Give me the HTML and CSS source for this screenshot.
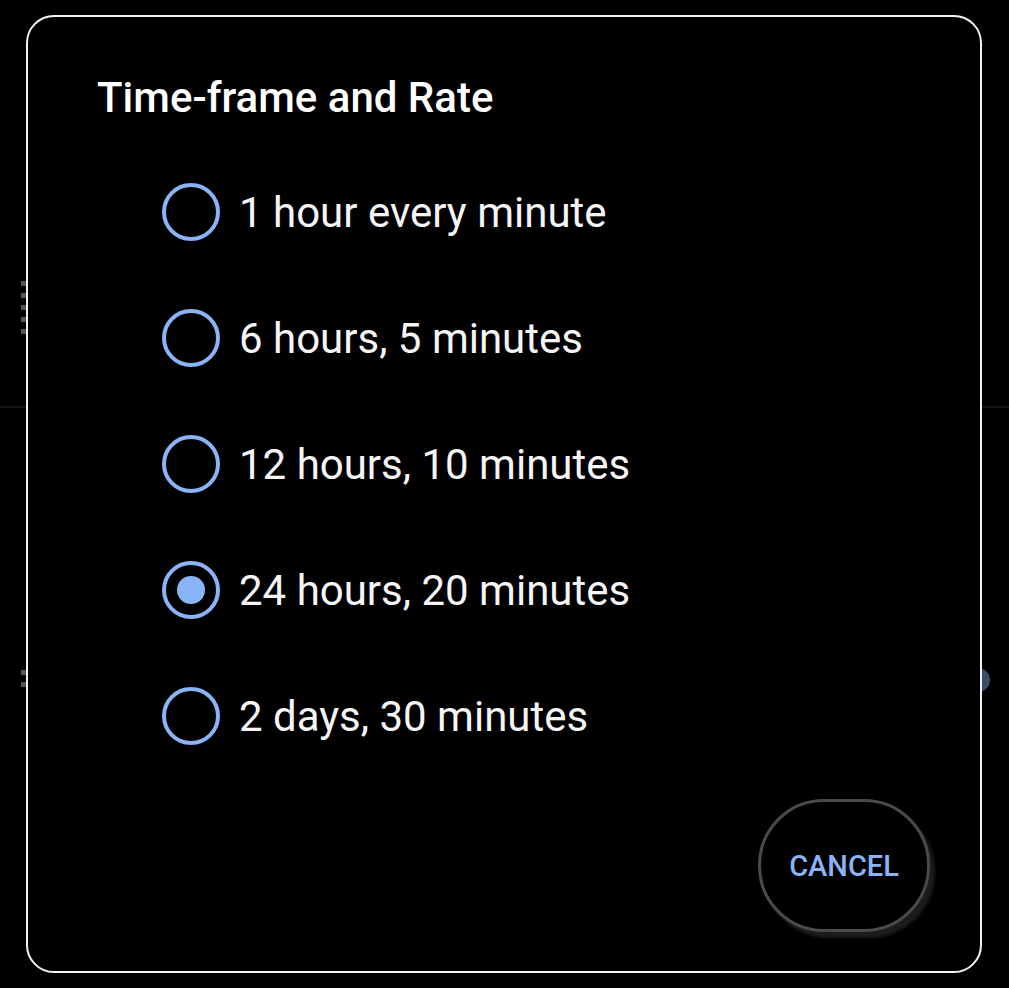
FILE: index.html
```html
<!DOCTYPE html>
<html>
<head>
    <title>Time-frame and Rate</title>
    <link rel="stylesheet" href="styles.css">
</head>
<body>
    <!-- faded screen content behind the dialog -->
    <div class="backdrop">
        <div class="divider"></div>
        <div class="grip grip-top"></div>
        <div class="grip grip-mid"></div>
        <div class="knob"></div>
    </div>

    <div class="dialog">
        <h2 class="title">Time-frame and Rate</h2>

        <div class="options">
            <label class="option">
                <span class="radio"></span>
                <span class="label">1 hour every minute</span>
            </label>
            <label class="option">
                <span class="radio"></span>
                <span class="label">6 hours, 5 minutes</span>
            </label>
            <label class="option">
                <span class="radio"></span>
                <span class="label">12 hours, 10 minutes</span>
            </label>
            <label class="option">
                <span class="radio checked"></span>
                <span class="label">24 hours, 20 minutes</span>
            </label>
            <label class="option">
                <span class="radio"></span>
                <span class="label">2 days, 30 minutes</span>
            </label>
        </div>

        <div class="actions">
            <button class="cancel">CANCEL</button>
        </div>
    </div>
</body>
</html>
```

FILE: styles.css
```css
body {
    margin: 0;
    background: #000;
    font-family: Roboto, "Noto Sans", Arial, sans-serif;
    color: #fff;
    overflow: hidden;
}

.backdrop {
    position: absolute;
    inset: 0;
}
.divider {
    position: absolute;
    left: 0;
    right: 0;
    top: 406px;
    height: 2px;
    background: #141414;
}
.grip {
    position: absolute;
    left: 21px;
    width: 5px;
    background: repeating-linear-gradient(#555 0 5px, transparent 5px 12px);
}
.grip-top { top: 281px; height: 53px; }
.grip-mid { top: 670px; height: 17px; }
.knob {
    position: absolute;
    left: 966px;
    top: 668px;
    width: 24px;
    height: 24px;
    border-radius: 50%;
    background: #3c4d68;
}

.dialog {
    position: relative;
    box-sizing: border-box;
    width: 956px;
    height: 958px;
    margin: 15px 0 0 26px;
    padding: 56px 50px 0 69px;
    background: #000;
    border: 2px solid #f2f2f2;
    border-radius: 28px;
    display: flex;
    flex-direction: column;
}

.title {
    margin: 0;
    font-size: 42px;
    font-weight: 500;
    line-height: 49px;
    color: #fff;
}

.options {
    margin-top: 27px;
    padding-left: 65px;
    display: flex;
    flex-direction: column;
}
.option {
    height: 126px;
    display: flex;
    align-items: center;
    gap: 19px;
}
.radio {
    box-sizing: border-box;
    width: 58px;
    height: 58px;
    border: 4px solid #8ab4f8;
    border-radius: 50%;
    display: flex;
    align-items: center;
    justify-content: center;
}
.radio.checked::after {
    content: "";
    width: 28px;
    height: 28px;
    border-radius: 50%;
    background: #8ab4f8;
}
.label {
    font-size: 42px;
    color: #f5f5f5;
}

.actions {
    margin-top: 20px;
    display: flex;
    justify-content: flex-end;
}
.cancel {
    box-sizing: border-box;
    width: 172px;
    height: 133px;
    background: #000;
    border: 3px solid #4a4a4a;
    border-radius: 66px;
    box-shadow: 5px 6px 3px #1c1c1c;
    font-family: Roboto, Arial, sans-serif;
    font-size: 29px;
    font-weight: 500;
    color: #8ab4f8;
    padding: 0;
}
```
